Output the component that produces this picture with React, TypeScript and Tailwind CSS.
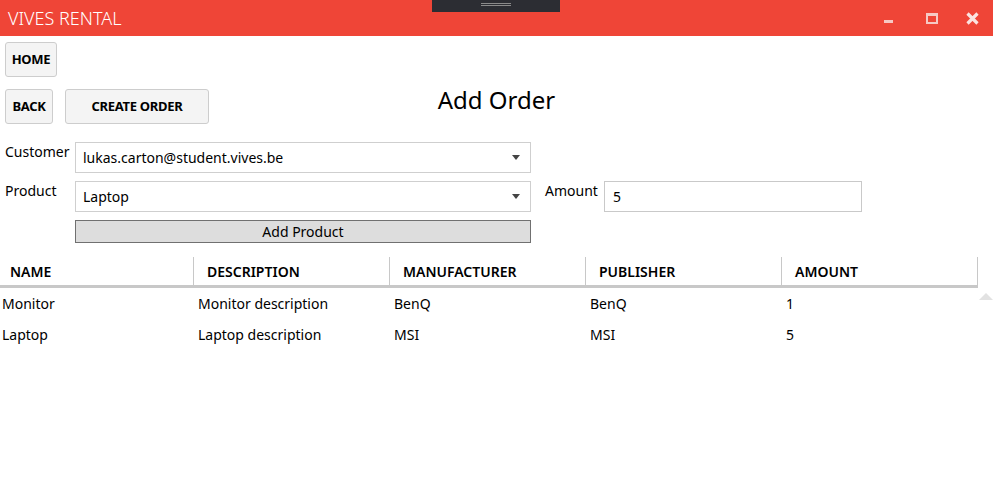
const font = "font-['Noto_Sans','Open_Sans',sans-serif]";

type Item = {
  name: string;
  description: string;
  manufacturer: string;
  publisher: string;
  amount: number;
};

const items: Item[] = [
  { name: "Monitor", description: "Monitor description", manufacturer: "BenQ", publisher: "BenQ", amount: 1 },
  { name: "Laptop", description: "Laptop description", manufacturer: "MSI", publisher: "MSI", amount: 5 },
];

const columns = ["NAME", "DESCRIPTION", "MANUFACTURER", "PUBLISHER", "AMOUNT"];

const Arrow = () => (
  <svg width="8" height="5" viewBox="0 0 8 5" className="shrink-0">
    <path d="M0 0 L8 0 L4 5 Z" fill="#444" />
  </svg>
);

const Combo = ({ value }: { value: string }) => (
  <div className="flex h-[31px] w-[456px] items-center justify-between border border-[#cfcfcf] bg-white pl-[7px] pr-[10px] text-[14px]">
    <span>{value}</span>
    <Arrow />
  </div>
);

const TitleBar = () => (
  <div className="relative flex h-[36px] items-center justify-between bg-[#ef4537] pl-[8px]">
    <span className="text-[18px] font-light text-white">VIVES RENTAL</span>
    {/* drag handle tab */}
    <div className="absolute left-[432px] top-0 flex h-[12px] w-[128px] justify-center bg-[#2c2d33] pt-[3px]">
      <div className="h-[3px] w-[30px] border-y border-[#8a8a8a]" />
    </div>
    <div className="flex h-full items-center">
      <div className="flex w-[45px] justify-center pt-[7px]">
        <div className="h-[3px] w-[9px] bg-[#f6c9c4]" />
      </div>
      <div className="flex w-[42px] justify-center">
        <div className="h-[11px] w-[12px] border-[2px] border-t-[3px] border-[#f6c9c4]" />
      </div>
      <div className="flex w-[40px] justify-center pr-[2px]">
        <svg width="13" height="13" viewBox="0 0 13 13">
          <path d="M1.5 1.5 L11.5 11.5 M11.5 1.5 L1.5 11.5" stroke="#fbe3e0" strokeWidth="3.2" />
        </svg>
      </div>
    </div>
  </div>
);

const Button = ({ label, className }: { label: string; className: string }) => (
  <button
    className={`flex h-[35px] items-center justify-center rounded-[3px] border border-[#cdcdcd] bg-[#f4f4f4] text-[13px] font-bold tracking-[-0.3px] text-black ${className}`}
  >
    {label}
  </button>
);

export default function App() {
  return (
    <div className={`h-[493px] w-[993px] overflow-hidden bg-white text-black ${font}`}>
      <TitleBar />
      <div className="pl-[5px] pt-[6px]">
        <Button label="HOME" className="w-[52px]" />
      </div>
      <div className="mt-[12px] grid grid-cols-[1fr_auto_1fr] items-start">
        <div className="flex gap-[12px] pl-[5px]">
          <Button label="BACK" className="w-[48px]" />
          <Button label="CREATE ORDER" className="w-[144px]" />
        </div>
        <h1 className="-mt-[1px] text-[24px] leading-none">Add Order</h1>
        <div />
      </div>

      <div className="mt-[18px] flex flex-col gap-[8px] pl-[5px] text-[14px]">
        <div className="flex">
          <span className="-mt-[1px] w-[70px]">Customer</span>
          <Combo value="lukas.carton@student.vives.be" />
        </div>
        <div className="flex">
          <span className="-mt-[1px] w-[70px]">Product</span>
          <Combo value="Laptop" />
          <span className="-mt-[1px] ml-[14px] w-[59px]">Amount</span>
          <div className="flex h-[31px] w-[258px] items-center border border-[#c9c9c9] pl-[8px]">5</div>
        </div>
        <div className="pl-[70px]">
          <button className="h-[23px] w-[456px] border border-[#707070] bg-[#dddddd] text-[14px] leading-none">
            Add Product
          </button>
        </div>
      </div>

      <div className="mt-[14px] flex">
        <div className="w-[978px]">
          <div className="flex h-[31px] border-b-[3px] border-[#c8c8c8] text-[14px] font-semibold">
            {columns.map((c, i) => (
              <div
                key={c}
                className={`flex items-center border-r border-[#c8c8c8] ${i === 0 ? "w-[194px] pl-[10px]" : "w-[196px] pl-[13px]"}`}
              >
                {c}
              </div>
            ))}
          </div>
          <div className="text-[14px]">
            {items.map((it) => (
              <div key={it.name} className="flex h-[31px] items-center">
                <span className="w-[198px] pl-[2px]">{it.name}</span>
                <span className="w-[196px]">{it.description}</span>
                <span className="w-[196px]">{it.manufacturer}</span>
                <span className="w-[196px]">{it.publisher}</span>
                <span className="w-[190px]">{it.amount}</span>
              </div>
            ))}
          </div>
        </div>
        <div className="flex flex-1 justify-center pt-[36px]">
          <svg width="14" height="7" viewBox="0 0 14 7">
            <path d="M0 7 L7 0 L14 7 Z" fill="#e2e2e2" />
          </svg>
        </div>
      </div>
    </div>
  );
}
